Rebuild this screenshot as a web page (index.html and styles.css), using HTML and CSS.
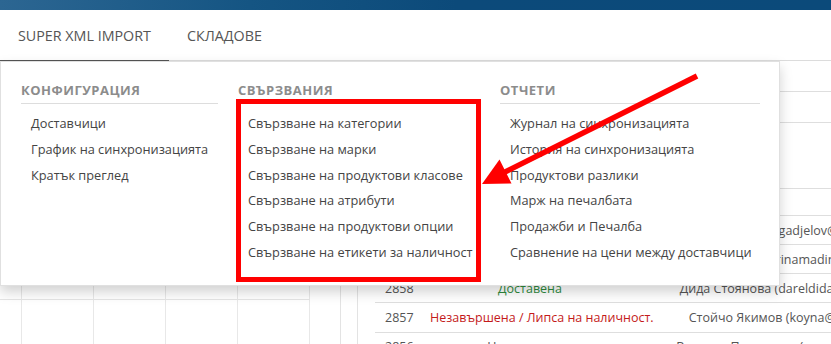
FILE: index.html
```html
<!DOCTYPE html>
<html lang="bg">
<head>
<meta charset="utf-8">
<title>Super XML Import</title>
<link rel="stylesheet" href="styles.css">
</head>
<body>
<div class="topbar"></div>
<nav class="tabs">
  <a class="tab active">SUPER XML IMPORT</a>
  <a class="tab">СКЛАДОВЕ</a>
</nav>
<main class="content">
  <section class="left-panel">
    <div class="chart">
      <div class="chart-cell"></div><div class="chart-cell"></div><div class="chart-cell"></div><div class="chart-cell"></div><div class="chart-cell"></div>
      <div class="chart-cell"></div><div class="chart-cell"></div><div class="chart-cell"></div><div class="chart-cell"></div><div class="chart-cell"></div>
    </div>
  </section>
  <section class="right-panel">
    <div class="orders">
      <div class="row h31"><span></span><span></span><span></span></div>
      <div class="row h31"><span></span><span></span><span></span></div>
      <div class="row h66"><span></span><span></span><span></span></div>
      <div class="row h27"><span></span><span></span><span></span></div>
      <div class="row h29"><span class="id">2860</span><span class="status ok">Доставена</span><span class="client">Генчо Гаджелов (gadjelov@outlook.com)</span></div>
      <div class="row h29"><span class="id">2859</span><span class="status ok">Доставена</span><span class="client">Мария Мадина (marinamadina@outlook.com)</span></div>
      <div class="row h29"><span class="id">2858</span><span class="status ok">Доставена</span><span class="client">Дида Стоянова (dareldida@gmail.com)</span></div>
      <div class="row h30"><span class="id">2857</span><span class="status bad">Незавършена / Липса на наличност.</span><span class="client">Стойчо Якимов (koyna@gmail.com)</span></div>
      <div class="row h30"><span class="id">2856</span><span class="status">Незавършена</span><span class="client">Веселин Преславов (v.preslaw@abv.bg)</span></div>
    </div>
  </section>
</main>

<div class="mega-menu">
  <div class="menu-col">
    <h3 class="menu-title">Конфигурация</h3>
    <ul class="menu-list">
      <li>Доставчици</li>
      <li>График на синхронизацията</li>
      <li>Кратък преглед</li>
    </ul>
  </div>
  <div class="menu-col">
    <h3 class="menu-title">Свързвания</h3>
    <ul class="menu-list">
      <li>Свързване на категории</li>
      <li>Свързване на марки</li>
      <li>Свързване на продуктови класове</li>
      <li>Свързване на атрибути</li>
      <li>Свързване на продуктови опции</li>
      <li>Свързване на етикети за наличност</li>
    </ul>
  </div>
  <div class="menu-col">
    <h3 class="menu-title">Отчети</h3>
    <ul class="menu-list">
      <li>Журнал на синхронизацията</li>
      <li>История на синхронизацията</li>
      <li>Продуктови разлики</li>
      <li>Марж на печалбата</li>
      <li>Продажби и Печалба</li>
      <li>Сравнение на цени между доставчици</li>
    </ul>
  </div>
</div>

<svg class="annotation" width="831" height="344" viewBox="0 0 831 344">
  <rect x="238.5" y="101.5" width="240" height="178" fill="none" stroke="#ff0000" stroke-width="5"/>
  <line x1="697" y1="76" x2="503" y2="173" stroke="#ff0000" stroke-width="5.5"/>
  <polygon points="482,184 499.5,159.5 511.5,183.5" fill="#ff0000"/>
</svg>
</body>
</html>
```
FILE: styles.css
```css
html, body {
  margin: 0;
  padding: 0;
}
body {
  width: 831px;
  height: 344px;
  overflow: hidden;
  position: relative;
  background: #fff;
  font-family: "Open Sans", "Noto Sans", sans-serif;
  color: #444;
}
.topbar {
  height: 10px;
  background: linear-gradient(90deg, #2c6692 0, #155583 30%, #0c4a7a 55%, #0b4a7a 100%);
}
.tabs {
  display: flex;
  height: 50px;
  border-bottom: 1px solid #dcdcdc;
}
.tab {
  display: block;
  height: 50px;
  line-height: 52px;
  padding: 0 18px;
  font-size: 14.3px;
  color: #555;
  text-decoration: none;
}
.tab.active {
  border-bottom: 1px solid #555;
}
.content {
  display: flex;
  height: 300px;
}
.left-panel {
  width: 341px;
  flex: none;
  box-sizing: border-box;
  border-right: 1px solid #e3e3e3;
}
.chart {
  display: grid;
  grid-template-columns: 22px repeat(4, 72px);
  grid-template-rows: 239px 60px;
}
.chart-cell {
  box-sizing: border-box;
  border-right: 1px solid #e8e8e8;
  border-bottom: 1px solid #e5e5e5;
}
.right-panel {
  flex: 1;
  min-width: 0;
  margin-left: 16px;
  border-left: 1px solid #e3e3e3;
  padding-left: 17px;
  overflow: hidden;
}
.orders {
  width: 583px;
  font-size: 12.5px;
}
.row {
  display: grid;
  grid-template-columns: 55px 200px 328px;
  align-items: center;
  box-sizing: border-box;
  border-bottom: 1px solid #dedede;
  white-space: nowrap;
}
.h31 { height: 31px; }
.h66 { height: 66px; }
.h27 { height: 27px; }
.h29 { height: 29px; }
.h30 { height: 30px; }
.row.h30:last-child { padding-bottom: 3px; }
.id {
  padding-left: 10px;
  color: #555;
}
.status {
  text-align: center;
  color: #555;
}
.status.ok { color: #2e8b3e; }
.status.bad { color: #c41a1a; }
.client {
  text-align: center;
  color: #555;
}
.mega-menu {
  position: absolute;
  top: 61px;
  left: 0;
  width: 780px;
  box-sizing: border-box;
  background: #fff;
  border: 1px solid rgba(0, 0, 0, 0.12);
  box-shadow: 0 6px 12px rgba(0, 0, 0, 0.18);
  padding: 19px 20px 19px 20px;
  display: grid;
  grid-template-columns: 197px 242px 260px;
  column-gap: 20px;
  align-items: start;
}
.menu-title {
  margin: 0;
  font-size: 13px;
  line-height: 18px;
  font-weight: 700;
  letter-spacing: 0.5px;
  text-transform: uppercase;
  color: #8c8c8c;
  padding-bottom: 4px;
  border-bottom: 1px solid #dddddd;
}
.menu-list {
  list-style: none;
  margin: 7px 0 0 0;
  padding: 0;
}
.menu-list li {
  font-size: 12.75px;
  line-height: 17.8px;
  padding: 4px 10px;
  color: #444;
  white-space: nowrap;
}
.annotation {
  position: absolute;
  top: 0;
  left: 0;
  pointer-events: none;
}
```
